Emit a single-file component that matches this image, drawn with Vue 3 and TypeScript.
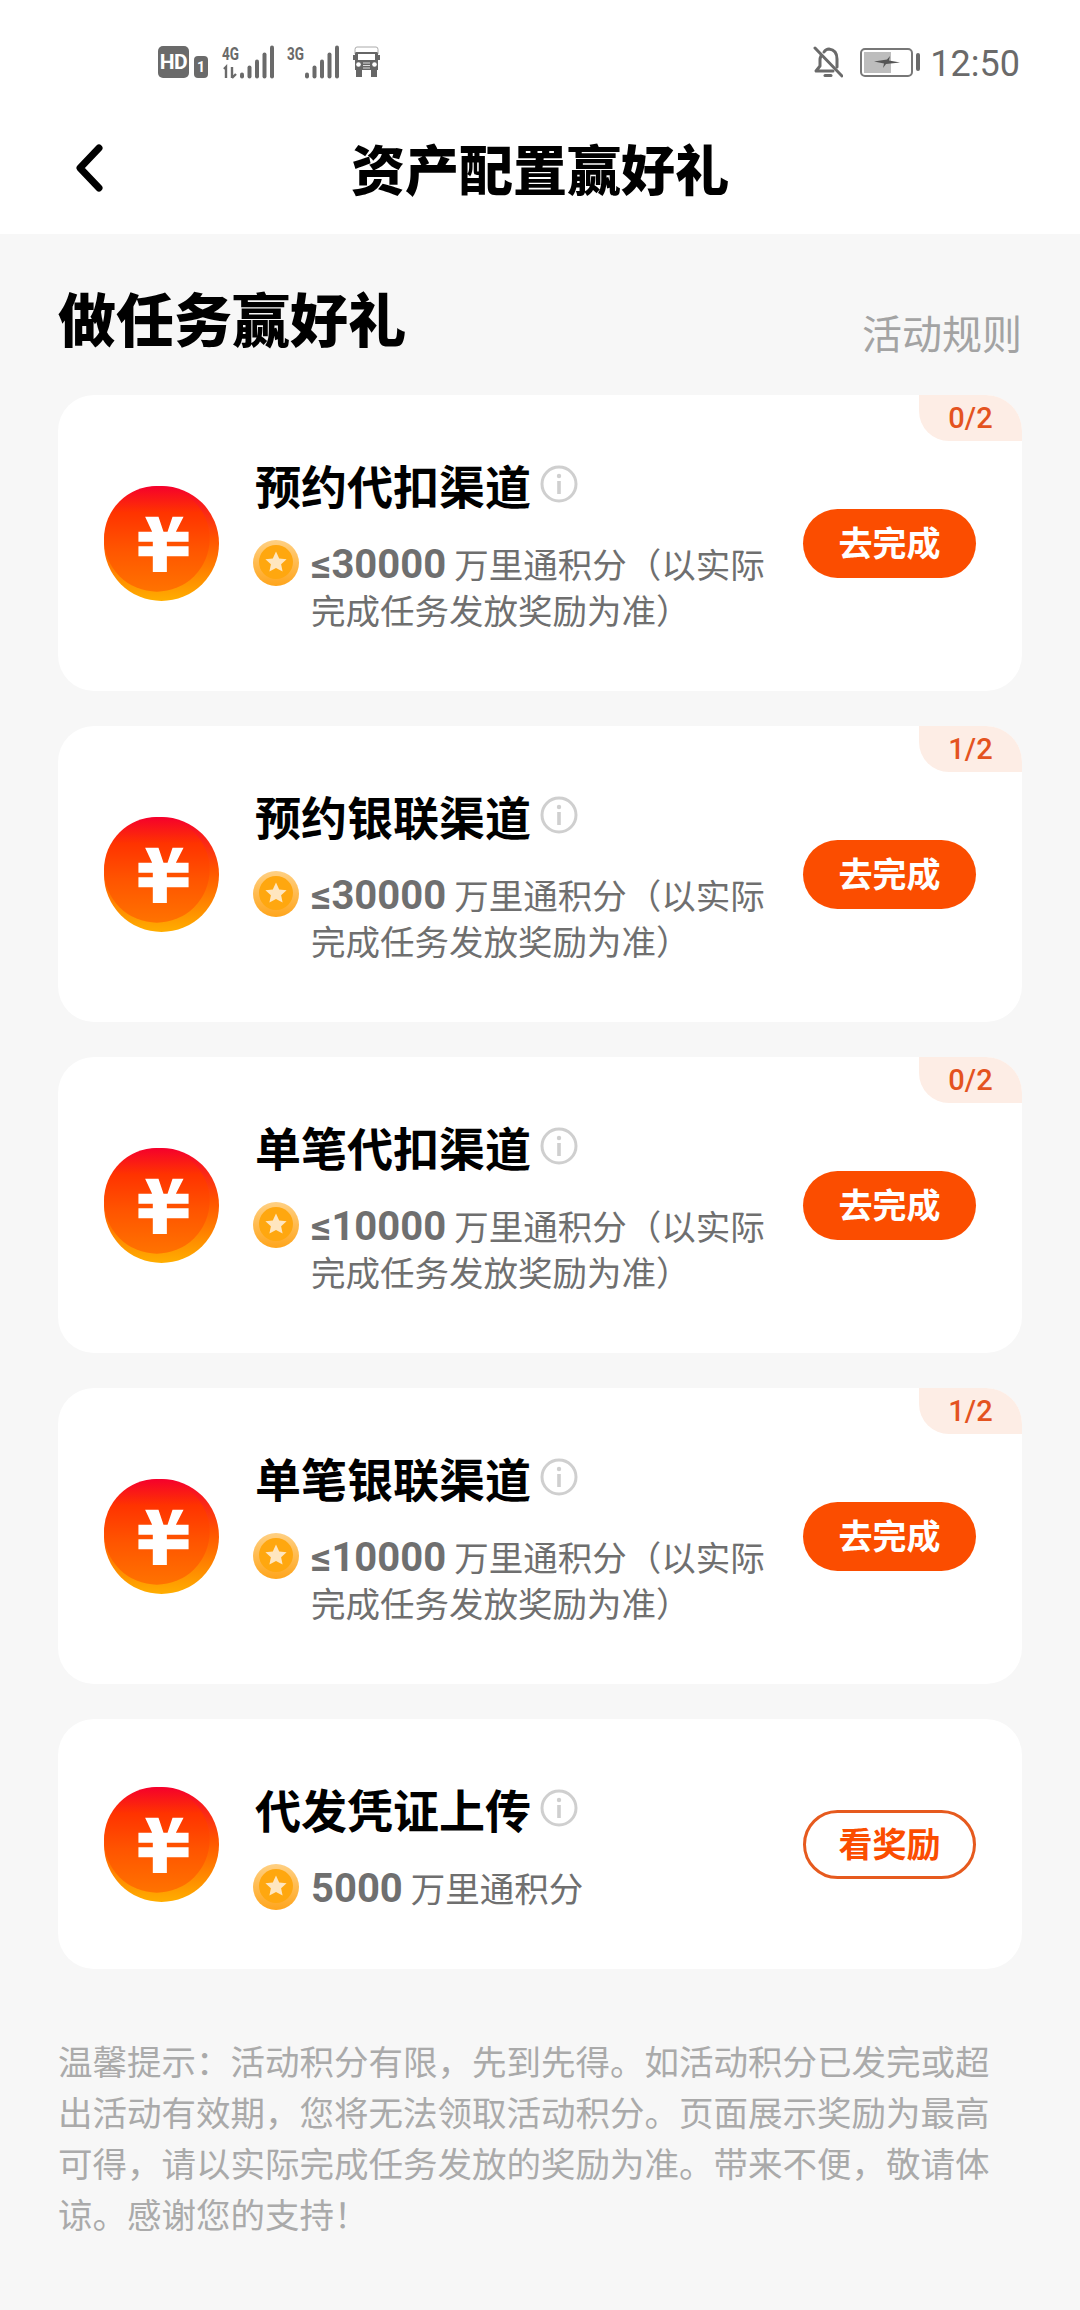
<script setup lang="ts">
interface Task {
  id: string
  title: string
  amount: string
  rest: string
  more?: string
  badge?: string
  action: string
  outline?: boolean
}
const tasks: Task[] = [
  { id: 'a', title: '预约代扣渠道', amount: '≤30000', rest: '万里通积分（以实际', more: '完成任务发放奖励为准）', badge: '0/2', action: '去完成' },
  { id: 'b', title: '预约银联渠道', amount: '≤30000', rest: '万里通积分（以实际', more: '完成任务发放奖励为准）', badge: '1/2', action: '去完成' },
  { id: 'c', title: '单笔代扣渠道', amount: '≤10000', rest: '万里通积分（以实际', more: '完成任务发放奖励为准）', badge: '0/2', action: '去完成' },
  { id: 'd', title: '单笔银联渠道', amount: '≤10000', rest: '万里通积分（以实际', more: '完成任务发放奖励为准）', badge: '1/2', action: '去完成' },
  { id: 'e', title: '代发凭证上传', amount: '5000', rest: '万里通积分', action: '看奖励', outline: true },
]
const signalBars = [
  { x: 0, h: 6 },
  { x: 7.5, h: 13 },
  { x: 15, h: 19 },
  { x: 22.5, h: 26 },
  { x: 30, h: 33 },
]
</script>

<template>
  <div class="page">
    <div class="status">
      <div class="status-left">
        <span class="hd">HD</span>
        <span class="sim">1</span>
        <svg class="signal signal-4g" viewBox="0 0 52 34" width="52" height="34">
          <text x="0" y="15" textLength="17" lengthAdjust="spacingAndGlyphs" class="net-text">4G</text>
          <path d="M2 24L4 22V33M10 22V33M10 33L14 29" fill="none" stroke="#6a6a6a" stroke-width="2.4" />
          <g transform="translate(18,0)">
            <rect v-for="b in signalBars" :key="b.x" :x="b.x" :y="33.5 - b.h" width="4" :height="b.h" rx="2" fill="#6a6a6a" />
          </g>
        </svg>
        <svg class="signal signal-3g" viewBox="0 0 52 34" width="52" height="34">
          <text x="0" y="15" textLength="17" lengthAdjust="spacingAndGlyphs" class="net-text">3G</text>
          <g transform="translate(18,0)">
            <rect v-for="b in signalBars" :key="b.x" :x="b.x" :y="33.5 - b.h" width="4" :height="b.h" rx="2" fill="#6a6a6a" />
          </g>
        </svg>
        <svg class="truck" viewBox="0 0 27 32" width="27" height="32">
          <path d="M2 3.5 Q2 1 4 1H23Q25 1 25 3.5V8H2Z" fill="#fff" stroke="#aaa" stroke-width="1" />
          <path d="M3 6H24Q25 6 25 8V24H2V8Q2 6 3 6Z" fill="#666" />
          <rect x="5" y="8" width="17" height="6" fill="#fff" />
          <rect x="0" y="9" width="2" height="5" fill="#666" />
          <rect x="25" y="9" width="2" height="5" fill="#666" />
          <circle cx="5.5" cy="18.5" r="2.3" fill="#fff" />
          <circle cx="21.5" cy="18.5" r="2.3" fill="#fff" />
          <path d="M10 17H17M10 19.5H17M10 22H17" stroke="#ddd" stroke-width="1" />
          <rect x="3" y="24" width="6" height="7" fill="#666" />
          <rect x="18" y="24" width="6" height="7" fill="#666" />
        </svg>
      </div>
      <div class="status-right">
        <svg class="bell" viewBox="0 0 30 32" width="30" height="32" fill="none" stroke="#6a6a6a" stroke-width="3" stroke-linecap="round" stroke-linejoin="round">
          <path d="M11 6 Q13 3 16 3 Q24 4 24 13V21" />
          <path d="M8 10 Q7 12 7 14V20L3 25H20" />
          <path d="M2 2L29 30" />
          <path d="M12 29.5H18" />
        </svg>
        <span class="battery">
          <span class="battery-body">
            <span class="battery-fill"></span>
            <svg class="bolt" viewBox="0 0 26 12" width="26" height="12">
              <path d="M0 5.5L13 3.5L16 0L15 4.5L26 6.5L12 8L9 12L10 7.5Z" fill="#555" />
            </svg>
          </span>
          <span class="battery-tip"></span>
        </span>
        <span class="time">12:50</span>
      </div>
    </div>

    <header class="nav">
      <svg class="back" viewBox="0 0 32 52" width="32" height="52" fill="none" stroke="#000" stroke-width="7" stroke-linecap="round" stroke-linejoin="round">
        <path d="M26 6L7 26L26 46" />
      </svg>
      <h1 class="nav-title">资产配置赢好礼</h1>
    </header>

    <main class="content">
      <div class="section-head">
        <h2 class="section-title">做任务赢好礼</h2>
        <span class="rules">活动规则</span>
      </div>

      <section v-for="t in tasks" :key="t.id" class="card">
        <span v-if="t.badge" class="badge">{{ t.badge }}</span>
        <svg class="avatar" viewBox="0 0 344 344" width="115" height="115">
          <defs>
            <linearGradient :id="'outer-' + t.id" x1="0" y1="0" x2="0" y2="1">
              <stop offset="0" stop-color="#f5002c" />
              <stop offset="0.45" stop-color="#ff5200" />
              <stop offset="1" stop-color="#ffae00" />
            </linearGradient>
            <linearGradient :id="'inner-' + t.id" x1="0" y1="0" x2="0" y2="1">
              <stop offset="0" stop-color="#f5002c" />
              <stop offset="0.25" stop-color="#ff3300" />
              <stop offset="0.6" stop-color="#ff5500" />
              <stop offset="1" stop-color="#ff7300" />
            </linearGradient>
          </defs>
          <circle cx="172" cy="172" r="172" :fill="'url(#outer-' + t.id + ')'" />
          <circle cx="158" cy="158" r="158" :fill="'url(#inner-' + t.id + ')'" />
          <path d="M123 92H163L178 137H190L205 92H238L215 137H253V167H188V180H253V210H188V257H146V210H103V180H146V167H103V137H144Z" fill="#fff" />
        </svg>
        <div class="info">
          <div class="title-row">
            <h3 class="card-title">{{ t.title }}</h3>
            <svg class="info-icon" viewBox="0 0 38 38" width="38" height="38">
              <circle cx="19" cy="19" r="17" fill="none" stroke="#cfcfcf" stroke-width="3" />
              <circle cx="19" cy="11" r="2.2" fill="#cfcfcf" />
              <rect x="17.2" y="16" width="3.6" height="13" fill="#cfcfcf" />
            </svg>
          </div>
          <div class="reward">
            <svg class="coin" viewBox="0 0 46 46" width="46" height="46">
              <defs>
                <linearGradient :id="'coin-' + t.id" x1="0" y1="0" x2="0" y2="1">
                  <stop offset="0" stop-color="#ffd083" />
                  <stop offset="1" stop-color="#ffa51c" />
                </linearGradient>
              </defs>
              <circle cx="23" cy="23" r="23" :fill="'url(#coin-' + t.id + ')'" />
              <circle cx="23" cy="22" r="17" fill="#ffa70f" />
              <path d="M23 11.5L26.2 18.4L33.6 19.2L28.1 24.2L29.6 31.6L23 27.9L16.4 31.6L17.9 24.2L12.4 19.2L19.8 18.4Z" fill="#ffe6bf" />
            </svg>
            <div class="reward-text">
              <div class="reward-line"><strong class="amount">{{ t.amount }}</strong><span class="rest">{{ t.rest }}</span></div>
              <div v-if="t.more" class="reward-line">{{ t.more }}</div>
            </div>
          </div>
        </div>
        <button class="action" :class="{ outline: t.outline }" type="button">{{ t.action }}</button>
      </section>

      <p class="tip">温馨提示：活动积分有限，先到先得。如活动积分已发完或超出活动有效期，您将无法领取活动积分。页面展示奖励为最高可得，请以实际完成任务发放的奖励为准。带来不便，敬请体谅。感谢您的支持！</p>
    </main>
  </div>
</template>

<style scoped>
.page {
  width: 1080px;
  min-height: 2310px;
  background: #f7f7f7;
  font-family: "Noto Sans CJK SC", "Noto Sans", sans-serif;
}
.status {
  height: 102px;
  box-sizing: border-box;
  padding: 22px 60px 0 158px;
  background: #fff;
  display: flex;
  justify-content: space-between;
  align-items: flex-start;
}
.status-left,
.status-right {
  height: 80px;
  display: flex;
  align-items: center;
}
.hd {
  width: 31px;
  height: 32px;
  border-radius: 5px;
  background: #6a6a6a;
  color: #fff;
  font: 700 21px/32px Roboto, sans-serif;
  letter-spacing: -0.5px;
  text-align: center;
}
.sim {
  width: 14px;
  height: 22px;
  margin: 10px 0 0 5px;
  border-radius: 4px;
  background: #6a6a6a;
  color: #fff;
  font: 700 14px/22px Roboto, sans-serif;
  text-align: center;
}
.signal {
  display: block;
  overflow: visible;
}
.signal-4g {
  margin-left: 14px;
}
.signal-3g {
  margin-left: 13px;
}
.net-text {
  fill: #6a6a6a;
  font: 700 18px Roboto, sans-serif;
}
.truck {
  margin-left: 14px;
}
.bell {
  margin-right: 17px;
}
.battery {
  display: flex;
  align-items: center;
}
.battery-body {
  position: relative;
  width: 53px;
  height: 29px;
  box-sizing: border-box;
  border: 2px solid #777;
  border-radius: 5px;
  padding: 2px;
}
.battery-fill {
  display: block;
  width: 27px;
  height: 100%;
  background: #bdbdbd;
}
.bolt {
  position: absolute;
  left: 12px;
  top: 6px;
}
.battery-tip {
  width: 4px;
  height: 18px;
  margin-left: 3px;
  border-radius: 2px;
  background: #6a6a6a;
}
.time {
  margin: 3px 0 0 10px;
  color: #6a6a6a;
  font: 400 36px/44px Roboto, sans-serif;
}
.nav {
  position: relative;
  height: 132px;
  background: #fff;
  display: flex;
  align-items: center;
  justify-content: center;
}
.back {
  position: absolute;
  left: 73px;
  top: 40px;
}
.nav-title {
  margin: 0;
  color: #000;
  font-size: 54px;
  line-height: 70px;
  font-weight: 900;
}
.content {
  padding: 48px 58px 0;
}
.section-head {
  display: flex;
  justify-content: space-between;
  align-items: flex-start;
  margin-bottom: 38px;
}
.section-title {
  margin: 0;
  color: #000;
  font-size: 58px;
  line-height: 70px;
  font-weight: 900;
}
.rules {
  margin-top: 25px;
  color: #a3a3a3;
  font-size: 40px;
  line-height: 50px;
}
.card {
  position: relative;
  display: flex;
  align-items: center;
  padding: 59px 46px;
  margin-bottom: 35px;
  background: #fff;
  border-radius: 36px;
}
.badge {
  position: absolute;
  right: 0;
  top: 0;
  width: 103px;
  height: 46px;
  border-radius: 0 36px 0 30px;
  background: #fdede5;
  color: #e4531f;
  font: 500 29px/46px Roboto, sans-serif;
  text-align: center;
}
.avatar {
  flex: none;
  margin-right: 36px;
}
.info {
  flex: 1;
  min-width: 0;
}
.title-row {
  display: flex;
  align-items: center;
  height: 60px;
  margin-bottom: 26px;
}
.card-title {
  margin: 0;
  color: #000;
  font-size: 46px;
  line-height: 60px;
  font-weight: 700;
}
.info-icon {
  margin-left: 9px;
}
.reward {
  display: flex;
  align-items: flex-start;
  margin-left: -2px;
}
.coin {
  flex: none;
  margin-right: 12px;
}
.reward-text {
  color: #6f6f6f;
  font-size: 34.5px;
  line-height: 46px;
}
.reward-line {
  height: 46px;
  white-space: nowrap;
}
.amount {
  font-family: Roboto, sans-serif;
  font-size: 40px;
  line-height: 1;
  font-weight: 700;
}
.rest {
  margin-left: 8px;
}
.action {
  flex: none;
  width: 173px;
  height: 69px;
  padding: 0 0 3px;
  border: 0;
  border-radius: 35px;
  background: #fb4d00;
  color: #fff;
  font-family: inherit;
  font-size: 34px;
  font-weight: 700;
}
.action.outline {
  background: #fff;
  border: 3px solid #e65a1e;
  color: #fb4d00;
}
.tip {
  margin: 66px 0 0;
  color: #aaa;
  font-size: 34.5px;
  line-height: 51px;
}
</style>

<style>
html,
body {
  margin: 0;
  background: #f7f7f7;
}
</style>
